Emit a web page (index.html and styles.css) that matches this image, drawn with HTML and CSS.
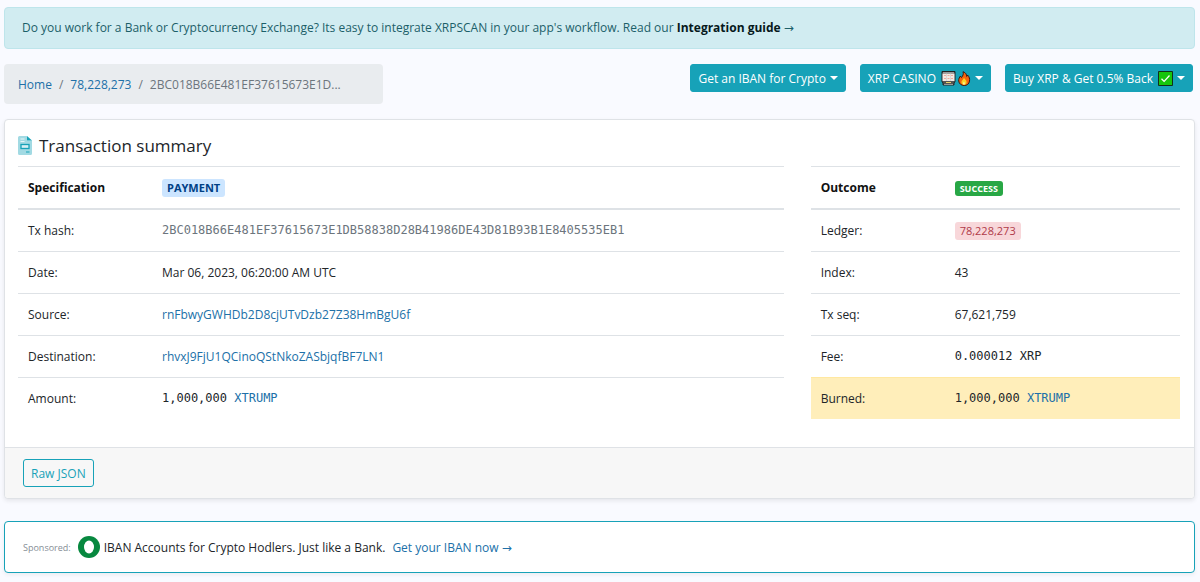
FILE: index.html
```html
<!DOCTYPE html>
<html lang="en">
<head>
<meta charset="utf-8">
<meta name="viewport" content="width=device-width, initial-scale=1">
<title>Transaction summary</title>
<link rel="stylesheet" href="styles.css">
</head>
<body>
<main class="page">
  <aside class="notice">Do you work for a Bank or Cryptocurrency Exchange? Its easy to integrate XRPSCAN in your app's workflow. Read our <a class="notice-link" href="#guide">Integration guide</a> <span class="arrow">→</span></aside>

  <div class="toolbar">
    <nav class="breadcrumb" aria-label="Breadcrumb">
      <a href="#home">Home</a><span class="slash">/</span><a href="#ledger">78,228,273</a><span class="slash">/</span><span class="current">2BC018B66E481EF37615673E1D...</span>
    </nav>
    <div class="actions">
      <button class="btn" type="button">Get an IBAN for Crypto<span class="caret"></span></button>
      <button class="btn" type="button">XRP CASINO
        <svg class="icon" width="15" height="15" viewBox="0 0 15 15" aria-hidden="true">
          <path d="M1 .5h13v10l-1 1.500v2H2v-2L1 10.500z" fill="#555" stroke="#222"/>
          <path d="M1.500 2.500h12v7.500h-12z" fill="#f3e9e4"/>
          <path d="M2 1.500h11" stroke="#999"/>
          <path d="M3 4.500h2M6.500 4.500h2M10 4.500h2M3 7.500h2M6.500 7.500h2M10 7.500h2" stroke="#efaa9d"/>
          <path d="M5.500 2.500v7.500M9.500 2.500v7.500" stroke="#ccc" stroke-width=".6"/>
          <path d="M5 11.500h5" stroke="#e8d36a"/><path d="M3 13.500h9" stroke="#999"/>
        </svg><svg class="icon-next" width="14" height="15" viewBox="0 0 14 15" aria-hidden="true">
          <path d="M6 .7c3 1 3.600 3 3.700 4.800.6-.3.8-.8.8-1.500 2 2 2.300 4 2 6-.4 3-2.500 4.500-5.300 4.500S2 12.800 1.700 10c-.2-2.200.8-3.700 1.800-5 .1.900.4 1.300 1 1.600C6 4.600 6.800 3 6 .7z" fill="#f7630c" stroke="#3a1a10"/>
          <path d="M7 6.500c.4 1.700 2.900 2.800 2.600 4.900-.2 1.600-1.300 2.400-2.600 2.400s-2.600-.9-2.600-2.500C4.400 9.500 6.800 8.300 7 6.500z" fill="#fbd324"/>
          <path d="M7 10.500c.8.900 1.200 3.200 0 3.300-1.300 0-1-2.200 0-3.300z" fill="#fff3b5"/>
        </svg><span class="caret"></span></button>
      <button class="btn" type="button">Buy XRP &amp; Get 0.5% Back
        <svg class="icon" width="15" height="15" viewBox="0 0 15 15" aria-hidden="true">
          <path d="M.5.500h14v14H.5z" fill="#16c60c" stroke="#10301a"/>
          <path d="M3.500 7.800l2.600 2.600 5.400-5.900" fill="none" stroke="#fff" stroke-width="1.300"/>
        </svg><span class="caret"></span></button>
    </div>
  </div>

  <section class="card">
    <div class="card-body">
      <h1 class="title">
        <svg class="doc" width="14" height="19" viewBox="0 0 14 19" aria-hidden="true">
          <path d="M1.500 0H9v4.500h5v13a1.500 1.500 0 0 1-1.500 1.500h-11A1.500 1.500 0 0 1 0 17.500v-16A1.500 1.500 0 0 1 1.500 0z" fill="#a2dae3"/>
          <path d="M9 0l5 4.500H9z" fill="#17a2b8"/>
          <path d="M2.500 3h4M2.500 5.500h4" stroke="#e7f6f8"/>
          <rect x="3" y="8.500" width="8" height="4" fill="#d9f0f4" stroke="#17a2b8" stroke-width="1.300"/>
          <path d="M8 16h3.500" stroke="#17a2b8"/>
        </svg>Transaction summary</h1>
      <div class="tables">
        <table class="table table-main">
          <thead>
            <tr><th class="label" scope="col">Specification</th><th scope="col"><span class="badge badge-type">PAYMENT</span></th></tr>
          </thead>
          <tbody>
            <tr><td>Tx hash:</td><td class="mono muted">2BC018B66E481EF37615673E1DB58838D28B41986DE43D81B93B1E8405535EB1</td></tr>
            <tr><td>Date:</td><td>Mar 06, 2023, 06:20:00 AM UTC</td></tr>
            <tr><td>Source:</td><td><a href="#source">rnFbwyGWHDb2D8cjUTvDzb27Z38HmBgU6f</a></td></tr>
            <tr><td>Destination:</td><td><a href="#destination">rhvxJ9FjU1QCinoQStNkoZASbjqfBF7LN1</a></td></tr>
            <tr><td>Amount:</td><td class="mono">1,000,000 <a href="#token">XTRUMP</a></td></tr>
          </tbody>
        </table>
        <table class="table table-side">
          <thead>
            <tr><th class="label" scope="col">Outcome</th><th scope="col"><span class="badge badge-success">SUCCESS</span></th></tr>
          </thead>
          <tbody>
            <tr><td>Ledger:</td><td><a class="badge badge-ledger" href="#ledger">78,228,273</a></td></tr>
            <tr><td>Index:</td><td>43</td></tr>
            <tr><td>Tx seq:</td><td>67,621,759</td></tr>
            <tr><td>Fee:</td><td class="mono">0.000012 XRP</td></tr>
            <tr class="burned"><td>Burned:</td><td class="mono">1,000,000 <a href="#token">XTRUMP</a></td></tr>
          </tbody>
        </table>
      </div>
    </div>
    <div class="card-footer"><button class="btn btn-outline" type="button">Raw JSON</button></div>
  </section>

  <aside class="sponsor">
    <small class="sponsor-label">Sponsored:</small>
    <svg class="ring" width="22" height="22" viewBox="0 0 22 22" aria-hidden="true"><circle cx="11" cy="11" r="11" fill="#07883f"/><ellipse cx="11" cy="11" rx="5" ry="6.500" fill="#fff"/></svg>
    <span>IBAN Accounts for Crypto Hodlers. Just like a Bank.</span>
    <a class="sponsor-link" href="#iban">Get your IBAN now <span class="arrow">→</span></a>
  </aside>
</main>
</body>
</html>
```

FILE: styles.css
```css
* { box-sizing: border-box; }

body {
  margin: 0;
  background: #f9faff;
  color: #212529;
  font: 12px/19px "Open Sans", "Noto Sans", sans-serif;
}

a { color: #2070a8; text-decoration: none; }

.page { padding: 7px 5px 9px 4px; }

.arrow { font-family: "DejaVu Sans", sans-serif; line-height: 1; }

.notice {
  padding: 10px 17px 11px;
  border: 1px solid #bee5eb;
  border-radius: 4px;
  background: #d1ecf1;
  color: #1c5f69;
}

.notice-link { color: #06191c; font-weight: 700; }

.toolbar {
  display: grid;
  grid-template-columns: repeat(12, minmax(0, 1fr));
  column-gap: 27px;
  align-items: start;
  margin: 15px 0;
}

.breadcrumb {
  grid-column: span 4;
  padding: 11px 14px 10px;
  border-radius: 4px;
  background: #e9ecef;
  white-space: nowrap;
}

.slash { margin: 0 7px; color: #6c757d; }
.current { color: #6c757d; }

.actions {
  grid-column: span 8;
  display: flex;
  justify-content: flex-end;
  gap: 14px;
  padding-right: 2px;
}

.btn {
  display: inline-flex;
  align-items: center;
  height: 28px;
  padding: 0 7px;
  border: 1px solid #17a2b8;
  border-radius: 3px;
  background: #17a2b8;
  color: #fff;
  font: inherit;
  white-space: nowrap;
}

.btn-outline { background: transparent; color: #17a2b8; }

.caret {
  margin-left: 4px;
  border: 4px solid transparent;
  border-top-color: #fff;
  border-bottom: 0;
}

.icon { flex: none; margin-left: 5px; }
.icon-next { flex: none; margin-left: 1px; }

.card {
  border: 1px solid #dfe2e6;
  border-radius: 4px;
  background: #fff;
  box-shadow: 0 2px 4px rgba(0, 0, 0, .08);
}

.card-body { padding: 13px 14px 28px 13px; }

.title {
  display: flex;
  align-items: center;
  gap: 7px;
  margin: 0 0 8px;
  font-size: 17px;
  font-weight: 500;
  line-height: 25px;
}

.doc { flex: none; }

.tables {
  display: grid;
  grid-template-columns: repeat(12, minmax(0, 1fr));
  column-gap: 27px;
  align-items: start;
}

.table { width: 100%; border-collapse: separate; border-spacing: 0; table-layout: fixed; }
.table-main { grid-column: span 8; }
.table-side { grid-column: span 4; }

.table th,
.table td {
  height: 42px;
  padding: 0 10px;
  border-top: 1px solid #dee2e6;
  text-align: left;
  vertical-align: middle;
}

.table th { height: 44px; border-bottom: 2px solid #dee2e6; color: #111; }
.table .label { width: 134px; }
.table tbody tr:first-child td { height: 41px; border-top: 0; }
.table .burned td { border-color: #ffe8a1; background: #ffeeba; }

.table .mono { font-family: "DejaVu Sans Mono", "Liberation Mono", monospace; font-size: 12px; }
.table .muted { color: #6c757d; }

.badge {
  display: inline-block;
  padding: 0 5px;
  border-radius: 3px;
  font-size: 11px;
  line-height: 18px;
  vertical-align: middle;
}

.badge-type { background: #cce5ff; color: #004085; }
.badge-success { background: #28a745; color: #fff; font-size: 9px; line-height: 15px; }
.badge-ledger { background: #f8d7da; color: #b03a48; }

.card-footer {
  padding: 11px 18px;
  border-top: 1px solid #dfe2e6;
  background: #f7f7f7;
  border-radius: 0 0 4px 4px;
}

.card-footer .btn { display: flex; }

.sponsor {
  display: flex;
  align-items: center;
  min-height: 52px;
  margin-top: 22px;
  padding: 0 18px;
  border: 1px solid #17a2b8;
  border-radius: 4px;
  background: #fff;
  box-shadow: 0 2px 4px rgba(0, 0, 0, .06);
}

.sponsor-label { color: #868e96; font-size: 9px; }
.ring { flex: none; margin: 0 4px 0 7px; }
.sponsor-link { margin-left: 7px; }
```
